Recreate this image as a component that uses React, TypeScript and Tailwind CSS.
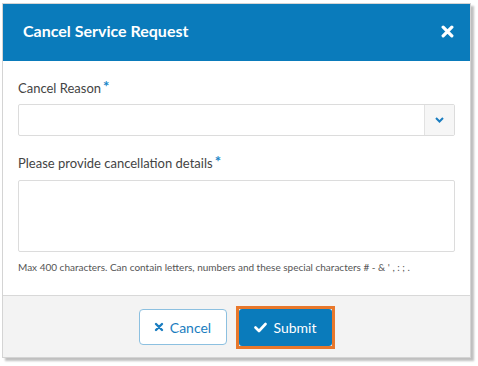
import React from "react";

export default function App() {
  return (
    <div className="w-[478px] h-[366px] bg-white" style={{ fontFamily: "Lato, 'Open Sans', sans-serif" }}>
      <div className="ml-[2px] mt-[3px] w-[469px] border border-[#d4d4d4] shadow-[3px_3px_2px_rgba(0,0,0,0.25)] bg-white">
        <div className="h-[57px] bg-[#0a7bbb] flex items-center justify-between pl-[20px] pr-[16px]">
          <span className="text-white font-bold text-[16px] -mt-[3px]">Cancel Service Request</span>
          <svg width="13" height="13" viewBox="0 0 12 12" className="-mt-[3px]">
            <path d="M2 2 L10 10 M10 2 L2 10" stroke="white" strokeWidth="3" strokeLinecap="round" />
          </svg>
        </div>
        <div className="pl-[15px] pr-[15px] pt-[19px] pb-[22px]">
          <div className="text-[13px] text-[#444] h-[16px] leading-[16px] flex">
            Cancel Reason<span className="text-[#1a86c8] text-[15px] ml-[2px] -mt-[2px] font-bold">*</span>
          </div>
          <div className="mt-[8px] h-[32px] border border-[#dcdcdc] rounded-[2px] flex">
            <div className="flex-1" />
            <div className="w-[30px] border-l border-[#e2e2e2] bg-[#f6f6f6] flex items-center justify-center">
              <svg width="9" height="6" viewBox="0 0 9 6">
                <path d="M1 1 L4.5 4.5 L8 1" stroke="#1a7dc0" strokeWidth="2" fill="none" />
              </svg>
            </div>
          </div>
          <div className="mt-[19px] text-[13px] text-[#444] h-[16px] leading-[16px] flex">
            Please provide cancellation details<span className="text-[#1a86c8] text-[15px] ml-[2px] -mt-[2px] font-bold">*</span>
          </div>
          <div className="mt-[9px] h-[72px] border border-[#dcdcdc] rounded-[2px]" />
          <div className="mt-[9px] text-[10px] text-[#555] leading-[12px]">
            Max 400 characters. Can contain letters, numbers and these special characters # - &amp; ' , : ; .
          </div>
        </div>
        <div className="border-t border-[#d8d8d8] bg-[#f3f3f3] h-[62px] flex items-center justify-center gap-[9px] pt-[1px]">
          <button className="w-[88px] h-[36px] rounded-[4px] border border-[#8cc0e0] bg-white text-[#1a7dc0] text-[14px] flex items-center justify-center gap-[6px]">
            <svg width="10" height="10" viewBox="0 0 10 10">
              <path d="M2 2 L8 8 M8 2 L2 8" stroke="#1a7dc0" strokeWidth="2.4" strokeLinecap="round" />
            </svg>
            Cancel
          </button>
          <div className="border-[3px] border-[#e8782c] p-0">
            <button className="w-[93px] h-[37px] rounded-[3px] bg-[#0a7bbb] text-white text-[14px] flex items-center justify-center gap-[7px]">
              <svg width="13" height="11" viewBox="0 0 13 11">
                <path d="M1.5 5.5 L5 9 L11.5 2" stroke="white" strokeWidth="2.6" fill="none" strokeLinecap="round" strokeLinejoin="round" />
              </svg>
              Submit
            </button>
          </div>
        </div>
      </div>
    </div>
  );
}
